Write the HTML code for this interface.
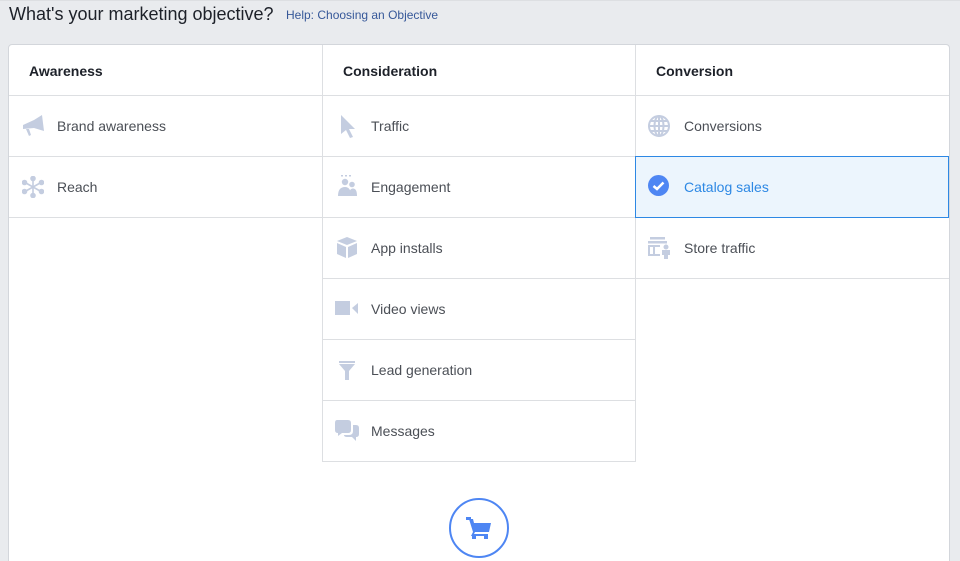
<!DOCTYPE html>
<html><head><meta charset="utf-8"><style>
*{margin:0;padding:0;box-sizing:border-box}
html,body{width:960px;height:561px;overflow:hidden}
body{background:#e9ebee;font-family:"Liberation Sans",Arial,sans-serif;position:relative}
.top{position:absolute;left:0;top:0;width:960px;height:1px;background:#dddfe2}
h1{position:absolute;left:9px;top:4px;font-size:18px;font-weight:normal;color:#1d2129}
.help{position:absolute;left:286px;top:8px;font-size:12px;color:#365899}
.card{position:absolute;left:8px;top:44px;width:942px;height:530px;background:#fff;border:1px solid #d3d6db;border-radius:4px}
.hd{position:absolute;top:63px;font-size:14px;font-weight:bold;color:#1d2129}
.hl{position:absolute;height:1px;background:#dddfe2}
.vl{position:absolute;width:1px;background:#dddfe2}
.it{position:absolute;font-size:14px;color:#4b4f56}
.ic{position:absolute}
</style></head><body>
<div class="top"></div>
<h1>What's your marketing objective?</h1>
<div class="help">Help: Choosing an Objective</div>
<div class="card"></div>
<div class="hd" style="left:29px">Awareness</div>
<div class="hd" style="left:343px">Consideration</div>
<div class="hd" style="left:656px">Conversion</div>
<div class="hl" style="left:9px;width:940px;top:95px"></div>
<div class="vl" style="left:322px;top:45px;height:417px"></div>
<div class="vl" style="left:635px;top:45px;height:417px"></div>
<div class="hl" style="left:9px;width:313px;top:156px"></div>
<div class="hl" style="left:9px;width:313px;top:217px"></div>
<div class="hl" style="left:322px;width:314px;top:156px"></div>
<div class="hl" style="left:322px;width:314px;top:217px"></div>
<div class="hl" style="left:322px;width:314px;top:278px"></div>
<div class="hl" style="left:322px;width:314px;top:339px"></div>
<div class="hl" style="left:322px;width:314px;top:400px"></div>
<div class="hl" style="left:322px;width:314px;top:461px"></div>
<div class="hl" style="left:636px;width:313px;top:278px"></div>
<div style="position:absolute;left:635px;top:156px;width:314px;height:62px;background:#ecf5fd;border:1px solid #2d88e4"></div>

<svg class="ic" style="left:22px;top:115px" width="24" height="22" viewBox="0 0 24 22"><path d="M1 10 L12 5 L20 0 L22 16 L12 13 L1 14Z" fill="#c4cde0"/><path d="M4 14 L7 21 L9 20 L7 14Z" fill="#c4cde0"/></svg>
<div class="it" style="left:57px;top:118px">Brand awareness</div>
<svg class="ic" style="left:22px;top:176px" width="22" height="22" viewBox="0 0 22 22" stroke="#c4cde0" stroke-width="1.6" fill="#c4cde0"><path d="M11 2V20M3 6.5L19 15.5M3 15.5L19 6.5"/><circle cx="11" cy="2.5" r="2"/><circle cx="11" cy="19.5" r="2"/><circle cx="2.5" cy="6.5" r="2"/><circle cx="19.5" cy="6.5" r="2"/><circle cx="2.5" cy="15.5" r="2"/><circle cx="19.5" cy="15.5" r="2"/></svg>
<div class="it" style="left:57px;top:179px">Reach</div>

<svg class="ic" style="left:340px;top:115px" width="16" height="23" viewBox="0 0 16 23"><path d="M1 0 L15 14 L9 14 L13 22 L10 23 L6 15 L1 19Z" fill="#c4cde0"/></svg>
<div class="it" style="left:371px;top:118px">Traffic</div>
<svg class="ic" style="left:336px;top:175px" width="22" height="22" viewBox="0 0 22 22" fill="#c4cde0"><rect x="5" y="0" width="2" height="1.5"/><rect x="9" y="0" width="2" height="1.5"/><rect x="13" y="0" width="2" height="1.5"/><circle cx="9" cy="7" r="3.2"/><circle cx="16" cy="9.5" r="2.8"/><path d="M2 21 Q2 12 9 12 Q15 12 15 21Z"/><path d="M13 21 Q13 13.5 17 13.5 Q21 13.5 21 21Z"/></svg>
<div class="it" style="left:371px;top:179px">Engagement</div>
<svg class="ic" style="left:336px;top:237px" width="22" height="22" viewBox="0 0 22 22" fill="#c4cde0"><path d="M11 0 L21 4 L11 8 L1 4Z"/><path d="M1 6 L10 10 L10 21 L1 17Z"/><path d="M21 6 L12 10 L12 21 L21 17Z"/></svg>
<div class="it" style="left:371px;top:240px">App installs</div>
<svg class="ic" style="left:335px;top:300px" width="24" height="17" viewBox="0 0 24 17" fill="#c4cde0"><rect x="0" y="1" width="15" height="14"/><path d="M17 8 L23 3 L23 14Z"/></svg>
<div class="it" style="left:371px;top:301px">Video views</div>
<svg class="ic" style="left:339px;top:361px" width="16" height="20" viewBox="0 0 16 20" fill="#c4cde0"><rect x="0" y="0" width="16" height="2"/><path d="M0 3 L16 3 L10 10 L6 10Z"/><rect x="6" y="10" width="4" height="9"/></svg>
<div class="it" style="left:371px;top:362px">Lead generation</div>
<svg class="ic" style="left:334px;top:420px" width="26" height="22" viewBox="0 0 26 22" fill="#c4cde0"><path d="M3 0 H14 Q17 0 17 3 V10 Q17 13 14 13 H8 L4 16 V13 Q1 13 1 10 V3 Q1 0 3 0Z"/><path d="M19 5 H22 Q25 5 25 8 V14 Q25 17 22 17 V21 L18 17 H13 Q10 17 10 15 H15 Q19 15 19 11Z"/></svg>
<div class="it" style="left:371px;top:423px">Messages</div>

<svg class="ic" style="left:648px;top:115px" width="22" height="22" viewBox="0 0 22 22" fill="none" stroke="#c4cde0" stroke-width="2"><circle cx="11" cy="11" r="10"/><ellipse cx="11" cy="11" rx="4.5" ry="10"/><path d="M1 11H21M3 6H19M3 16H19M11 1V21"/></svg>
<div class="it" style="left:684px;top:118px">Conversions</div>
<svg class="ic" style="left:648px;top:175px" width="21" height="21" viewBox="0 0 21 21"><circle cx="10.5" cy="10.5" r="10.5" fill="#4e86f3"/><path d="M5.5 11 L9 14 L15.5 7.5" stroke="#fff" stroke-width="2.5" fill="none"/></svg>
<div class="it" style="left:684px;top:179px;color:#2d88e4">Catalog sales</div>
<svg class="ic" style="left:648px;top:237px" width="24" height="22" viewBox="0 0 24 22" fill="#c4cde0"><rect x="2" y="0" width="15" height="2.5"/><rect x="0" y="4" width="19" height="2.5"/><rect x="0" y="8" width="12" height="2"/><rect x="0" y="8" width="2" height="10"/><rect x="0" y="17" width="12" height="2"/><rect x="5" y="10" width="2" height="7"/><circle cx="18" cy="10" r="2.5"/><rect x="14" y="13" width="8" height="5"/><rect x="16" y="17" width="4" height="5"/></svg>
<div class="it" style="left:684px;top:240px">Store traffic</div>

<div style="position:absolute;left:449px;top:498px;width:60px;height:60px;border:2px solid #4e86f3;border-radius:50%"></div>
<svg class="ic" style="left:466px;top:517px" width="26" height="22" viewBox="0 0 26 22" fill="#4e86f3"><rect x="0" y="0" width="5" height="3"/><path d="M3 2 L7 2 L8 6 L25 6 L23 15 L9 15 L8 17 L22 17 L22 19 L5 19 L7 15Z"/><rect x="6" y="19" width="4" height="3"/><rect x="18" y="19" width="4" height="3"/></svg>
</body></html>
